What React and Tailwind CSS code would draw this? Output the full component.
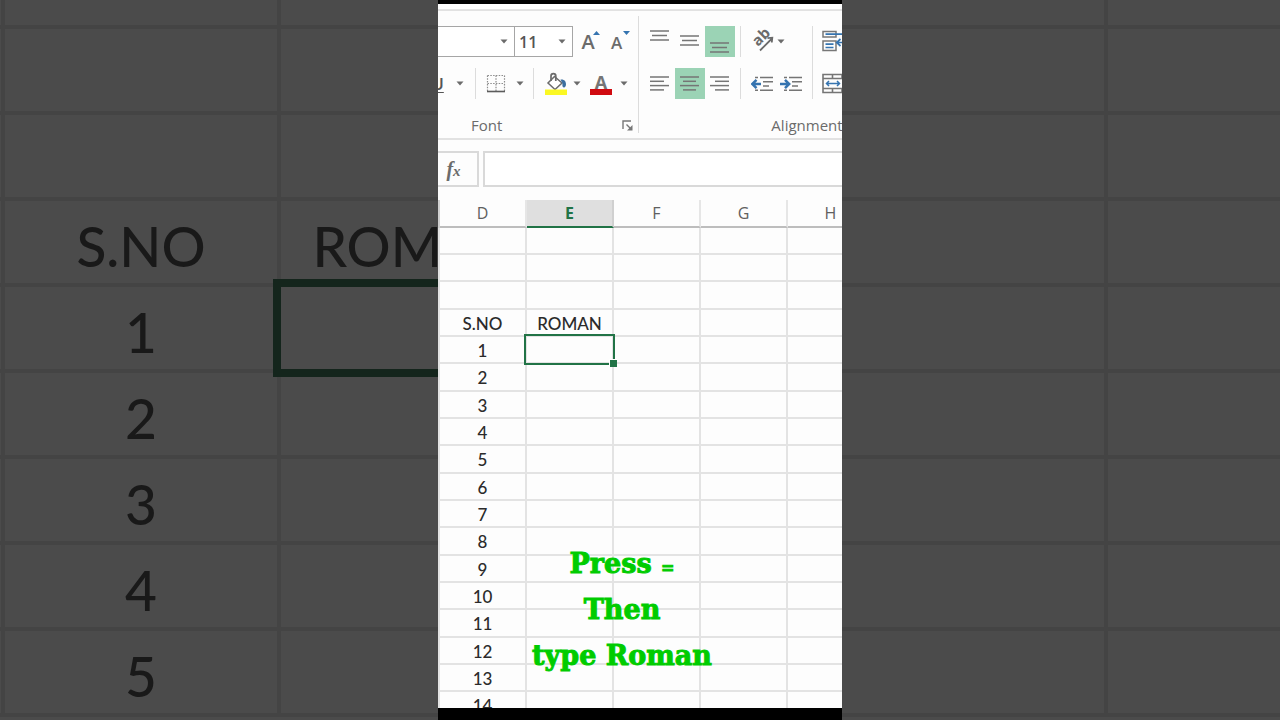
import clsx from 'clsx'

const columns = ['D', 'E', 'F', 'G', 'H']
const rows = ['', '', '', 'S.NO', 1, 2, 3, 4, 5, 6, 7, 8, 9, 10, 11, 12, 13, 14]
const backdropRows = ['', '', '', 'S.NO', 1, 2, 3, 4, 5]

const Caret = ({ className }) => (
  <span className={clsx('flex shrink-0 items-center justify-center', className)}>
    <svg width="8" height="5" viewBox="0 0 8 5" fill="#6b6b6b">
      <path d="M0.5 0.5h7L4 4.5z" />
    </svg>
  </span>
)

const Separator = ({ className }) => (
  <span className={clsx('w-px shrink-0 self-stretch bg-[#dcdcdc]', className)} />
)

const lineSets = {
  left: [[0, 19], [0, 14], [0, 19], [0, 14]],
  center: [[0, 19], [3, 16], [0, 19], [3, 16]],
  right: [[0, 19], [5, 19], [0, 19], [5, 19]],
}

// horizontal paragraph alignment
const TextLines = ({ kind }) => (
  <svg width="20" height="16" viewBox="0 0 20 16" stroke="#757575" strokeWidth="1.5">
    {lineSets[kind].map(([from, to], i) => (
      <path key={i} d={`M${from} ${1 + i * 4.3}H${to}`} />
    ))}
  </svg>
)

// vertical alignment, three lines placed at the given height
const VerticalLines = ({ top }) => (
  <svg width="20" height="30" viewBox="0 0 20 30" stroke="#757575" strokeWidth="1.5">
    <path d={`M0 ${top}H19M2 ${top + 4.5}H17M0 ${top + 9}H19`} />
  </svg>
)

const BordersIcon = () => (
  <svg width="20" height="20" viewBox="0 0 20 20" fill="none" stroke="#8d8d8d">
    <path d="M1.5 1.5h17M1.5 9.5h17M1.5 1.5v16M10 1.5v16M18.5 1.5v16" strokeWidth="1.2" strokeDasharray="1.5 1.3" />
    <path d="M1 17.5h18" stroke="#5c5c5c" strokeWidth="1.6" />
  </svg>
)

const FillIcon = () => (
  <svg width="24" height="24" viewBox="0 0 24 24" fill="none">
    <path d="M10.5 4.5 18 11l-7 6.5L4 11z" fill="#fff" stroke="#6b6b6b" strokeWidth="1.5" />
    <path d="M7 9V4a2.4 2.4 0 0 1 4.8 0v5" stroke="#6b6b6b" strokeWidth="1.7" />
    <path d="M16.5 7.5c4-.5 5.500 2 5.500 4.500 0 2-.8 3.500-2 3.500s-2-1.500-1.500-4z" fill="#3c6f9f" />
    <path d="M1 17.500h22v5.500H1z" fill="#fbf823" />
  </svg>
)

const OrientationIcon = () => (
  <svg className="overflow-visible" width="24" height="24" viewBox="0 0 24 24" fill="none">
    <text x="0" y="0" transform="translate(7 17) rotate(-45)" fontFamily="Open Sans, sans-serif" fontSize="15" fontWeight="700" fill="#6b6b6b">
      ab
    </text>
    <path d="M9 20.500 21 8.500M16.500 8.200l4.800-.5-.5 4.800" stroke="#6b6b6b" strokeWidth="1.8" />
  </svg>
)

const IndentIcon = ({ increase }) => (
  <svg width="24" height="18" viewBox="0 0 24 18" fill="none">
    <path d="M4 2.500h3M9 2.500h13M12 6.800h10M12 11h6M4 15.200h3M9 15.200h13" stroke="#757575" strokeWidth="1.5" />
    <path
      d={increase ? 'M0 9h8.500M5 4.800 9.200 9 5 13.200' : 'M10 9H1.500M5.500 4.800 1.300 9l4.200 4.200'}
      stroke="#3574b0"
      strokeWidth="2.500"
    />
  </svg>
)

const WrapIcon = () => (
  <svg width="30" height="24" viewBox="0 0 30 24" fill="none">
    <path d="M1 1.500h13v5.500H1zM1 11h13v9.500H1z" stroke="#777" strokeWidth="1.500" />
    <path d="M3.500 4.200H22M3.500 14.200h8M3.500 17.500h8M22 12.500h-7M18.500 9l-3.800 3.500 3.800 3.500" stroke="#3574b0" strokeWidth="1.700" />
  </svg>
)

const MergeIcon = () => (
  <svg width="30" height="22" viewBox="0 0 30 22" fill="none">
    <path d="M1 1.500h28v18H1zM1 5.500h28M1 15.500h28M10.500 1.500v4M20 1.500v4M10.500 15.500v4M20 15.500v4" stroke="#757575" strokeWidth="1.600" />
    <path d="M4.500 10.500h13M7 8l-2.500 2.500L7 13M15 8l2.500 2.500L15 13" stroke="#3574b0" strokeWidth="1.500" />
  </svg>
)

const RibbonButton = ({ label, active, className, children }) => (
  <button
    type="button"
    aria-label={label}
    className={clsx('flex h-[31px] shrink-0 items-center justify-center', active && 'bg-[#9bd3b5]', className)}
  >
    {children}
  </button>
)

const FontGroup = () => (
  <div className="flex w-[200px] shrink-0 flex-col pt-[15px]">
    <div className="flex h-[31px]">
      <div className="relative w-[77px]">
        <select aria-label="Font name" className="h-full w-full appearance-none border border-l-0 border-[#a6a6a6] bg-white" />
        <Caret className="pointer-events-none absolute inset-y-0 right-[7px]" />
      </div>
      <div className="relative w-[58px]">
        <select aria-label="Font size" className="h-full w-full appearance-none border border-l-0 border-[#a6a6a6] bg-white pl-[4px] text-[16px] font-semibold text-[#555]">
          <option>11</option>
        </select>
        <Caret className="pointer-events-none absolute inset-y-0 right-[7px]" />
      </div>
      <RibbonButton label="Increase font size" className="relative w-[30px]">
        <span className="text-[20px] font-semibold text-[#6b6b6b]">A</span>
        <svg className="absolute right-[3px] top-[5px]" width="7" height="4" viewBox="0 0 7 4" fill="#3574b0">
          <path d="M3.500 0 7 4H0z" />
        </svg>
      </RibbonButton>
      <RibbonButton label="Decrease font size" className="relative w-[27px]">
        <span className="pt-[3px] text-[17px] font-semibold text-[#6b6b6b]">A</span>
        <svg className="absolute right-0 top-[5px]" width="7" height="4" viewBox="0 0 7 4" fill="#3574b0">
          <path d="M3.500 4 7 0H0z" />
        </svg>
      </RibbonButton>
    </div>

    <div className="mt-[11px] flex h-[31px]">
      <RibbonButton label="Underline" className="w-[6px] overflow-hidden">
        <span className="shrink-0 pr-[7px] text-[17px] font-semibold text-[#555] underline underline-offset-2">U</span>
      </RibbonButton>
      <Caret className="w-[31px]" />
      <Separator />
      <RibbonButton label="Borders" className="ml-[10px] w-[20px]">
        <BordersIcon />
      </RibbonButton>
      <Caret className="w-[27px]" />
      <Separator />
      <RibbonButton label="Fill color" className="ml-[10px] w-[24px]">
        <FillIcon />
      </RibbonButton>
      <Caret className="w-[18px]" />
      <RibbonButton label="Font color" className="ml-[4px] w-[22px] flex-col">
        <span className="pt-[2px] text-[18px] font-bold leading-[14px] text-[#757575]">A</span>
        <span className="h-[6px] w-full bg-[#d00a10]" />
      </RibbonButton>
      <Caret className="w-[24px]" />
    </div>

    <div className="mt-[13px] flex h-[26px] items-center">
      <span className="flex-1 pl-[33px] text-[15px] font-medium text-[#6b6b6b]">Font</span>
      <button type="button" aria-label="Font settings" className="mr-[5px]">
        <svg width="11" height="11" viewBox="0 0 11 11" fill="none" stroke="#777" strokeWidth="1.400">
          <path d="M1 9V1h8M4.500 4.500l4 4" />
          <path d="M10.500 5v5.500H5z" fill="#777" stroke="none" />
        </svg>
      </button>
    </div>
  </div>
)

const AlignmentGroup = () => (
  <div className="flex w-[336px] shrink-0 flex-col pt-[15px]">
    <div className="flex">
      <div>
        <div className="flex pl-[6px]">
          <RibbonButton label="Top align" className="w-[30px]"><VerticalLines top={4} /></RibbonButton>
          <RibbonButton label="Middle align" className="w-[30px]"><VerticalLines top={9} /></RibbonButton>
          <RibbonButton label="Bottom align" active className="w-[30px]"><VerticalLines top={16} /></RibbonButton>
          <Separator className="ml-[5px]" />
          <RibbonButton label="Orientation" className="ml-[10px] w-[24px]"><OrientationIcon /></RibbonButton>
          <Caret className="w-[12px]" />
        </div>
        <div className="mt-[11px] flex pl-[6px]">
          <RibbonButton label="Align left" className="w-[30px]"><TextLines kind="left" /></RibbonButton>
          <RibbonButton label="Center" active className="w-[30px]"><TextLines kind="center" /></RibbonButton>
          <RibbonButton label="Align right" className="w-[30px]"><TextLines kind="right" /></RibbonButton>
          <Separator className="ml-[5px]" />
          <RibbonButton label="Decrease indent" className="ml-[10px] w-[24px]"><IndentIcon /></RibbonButton>
          <RibbonButton label="Increase indent" className="ml-[5px] w-[24px]"><IndentIcon increase /></RibbonButton>
        </div>
      </div>
      <Separator className="ml-[8px]" />
      <div className="ml-[9px] flex flex-col gap-[11px]">
        <RibbonButton label="Wrap text"><WrapIcon /></RibbonButton>
        <RibbonButton label="Merge and center"><MergeIcon /></RibbonButton>
      </div>
    </div>
    <div className="mt-[13px] flex h-[26px] items-center justify-center text-[15px] font-medium text-[#6b6b6b]">
      Alignment
    </div>
  </div>
)

const Sheet = () => (
  <table className="w-[437px] table-fixed border-separate border-spacing-0 text-center">
    <colgroup>
      <col className="w-[2px]" />
      {columns.map((name) => <col key={name} className="w-[87px]" />)}
    </colgroup>
    <thead>
      <tr className="h-[28px]">
        <th className="border-b-2 border-r-2 border-[#d0d0d0] p-0" />
        {columns.map((name) => (
          <th
            key={name}
            className={clsx(
              'border-b-2 border-r-2 p-0 text-[16px] leading-[20px]',
              name === 'E'
                ? 'border-b-[#217346] border-r-[#d0d0d0] bg-[#dfdfdf] font-bold text-[#217346]'
                : 'border-b-[#bdbdbd] border-r-[#e6e6e6] font-medium text-[#606060]'
            )}
          >
            {name}
          </th>
        ))}
      </tr>
    </thead>
    <tbody className="font-[Lato,sans-serif] text-[17px] leading-[20px] text-[#2b2b2b]">
      {rows.map((value, i) => (
        <tr key={i} className={i % 3 === 2 ? 'h-[28px]' : 'h-[27px]'}>
          <td className="border-b-2 border-r-2 border-[#e3e3e3] p-0" />
          {columns.map((name) => (
            <td key={name} className="relative border-b-2 border-r-2 border-[#e3e3e3] p-0 pt-[2px] font-medium">
              {name === 'D' && value}
              {name === 'E' && value === 'S.NO' && 'ROMAN'}
              {name === 'E' && value === 1 && (
                <div className="absolute -inset-[3px] z-10 border-2 border-[#217346]">
                  <span className="absolute -bottom-[4px] -right-[4px] size-[8px] border-l border-t border-white bg-[#217346]" />
                </div>
              )}
            </td>
          ))}
        </tr>
      ))}
    </tbody>
  </table>
)

const LeftBackdrop = () => (
  <div className="min-w-0 flex-1 overflow-hidden bg-[#4b4b4b]">
    <table className="w-[557px] table-fixed border-separate border-spacing-0 text-center font-[Lato,sans-serif] text-[55px] font-medium leading-[64px] text-[#191919]">
      <colgroup>
        <col className="w-[5px]" />
        <col className="w-[276px]" />
        <col className="w-[276px]" />
      </colgroup>
      <tbody>
        {backdropRows.map((value, i) => (
          <tr key={i} className={i === 0 ? 'h-[29px]' : 'h-[86px]'}>
            <td className="border-b-4 border-r-4 border-[#444] p-0" />
            <td className={clsx('border-b-4 border-r-4 border-[#444] p-0', value && 'pt-[8px]')}>{value}</td>
            <td className={clsx('relative border-b-4 border-r-4 border-[#444] p-0', value && 'pt-[8px]')}>
              {value === 'S.NO' && 'ROMAN'}
              {value === 1 && <div className="absolute -inset-[8px] border-8 border-[#14251c]" />}
            </td>
          </tr>
        ))}
      </tbody>
    </table>
  </div>
)

const RightBackdrop = () => (
  <div className="min-w-0 flex-1 overflow-hidden bg-[#4b4b4b]">
    <table className="w-full table-fixed border-separate border-spacing-0">
      <colgroup>
        <col className="w-[266px]" />
        <col />
      </colgroup>
      <tbody>
        {backdropRows.map((_, i) => (
          <tr key={i} className={i === 0 ? 'h-[29px]' : 'h-[86px]'}>
            <td className="border-b-4 border-r-4 border-[#444] p-0" />
            <td className="border-b-4 border-[#444] p-0" />
          </tr>
        ))}
      </tbody>
    </table>
  </div>
)

const App = () => {
  return (
    <div className="flex h-screen overflow-hidden bg-black font-['Open_Sans',sans-serif]">
      <LeftBackdrop />

      <main className="flex w-[404px] shrink-0 flex-col overflow-hidden border-b-[12px] border-t-4 border-black bg-[#fdfdfd]">
        {/* Ribbon */}
        <div className="mt-[5px] flex shrink-0 overflow-hidden border-b-2 border-t-2 border-[#e2e2e2]">
          <FontGroup />
          <Separator className="my-[5px]" />
          <AlignmentGroup />
        </div>

        {/* Formula bar */}
        <div className="mb-[13px] mt-[11px] flex h-[36px] shrink-0 gap-[4px]">
          <button type="button" aria-label="Insert function" className="w-[41px] border-2 border-l-0 border-[#d9d9d9] pr-[8px] font-['Liberation_Serif',serif] text-[20px] font-bold italic leading-none text-[#6b6b6b]">
            f<span className="text-[15px]">x</span>
          </button>
          <input aria-label="Formula" className="min-w-0 flex-1 border-2 border-r-0 border-[#d9d9d9] bg-white" />
        </div>

        <div className="relative min-h-0 flex-1 overflow-hidden">
          <Sheet />
          <p className="absolute left-[82px] top-[341px] w-[204px] text-center font-['DejaVu_Serif',serif] text-[27px] font-bold leading-[46px] text-[#0c0] [-webkit-text-stroke:1px_#0c0]">
            Press <span className="text-[16px] leading-none">=</span>
            <br />
            Then
            <br />
            type Roman
          </p>
        </div>
      </main>

      <RightBackdrop />
    </div>
  )
}

export default App
